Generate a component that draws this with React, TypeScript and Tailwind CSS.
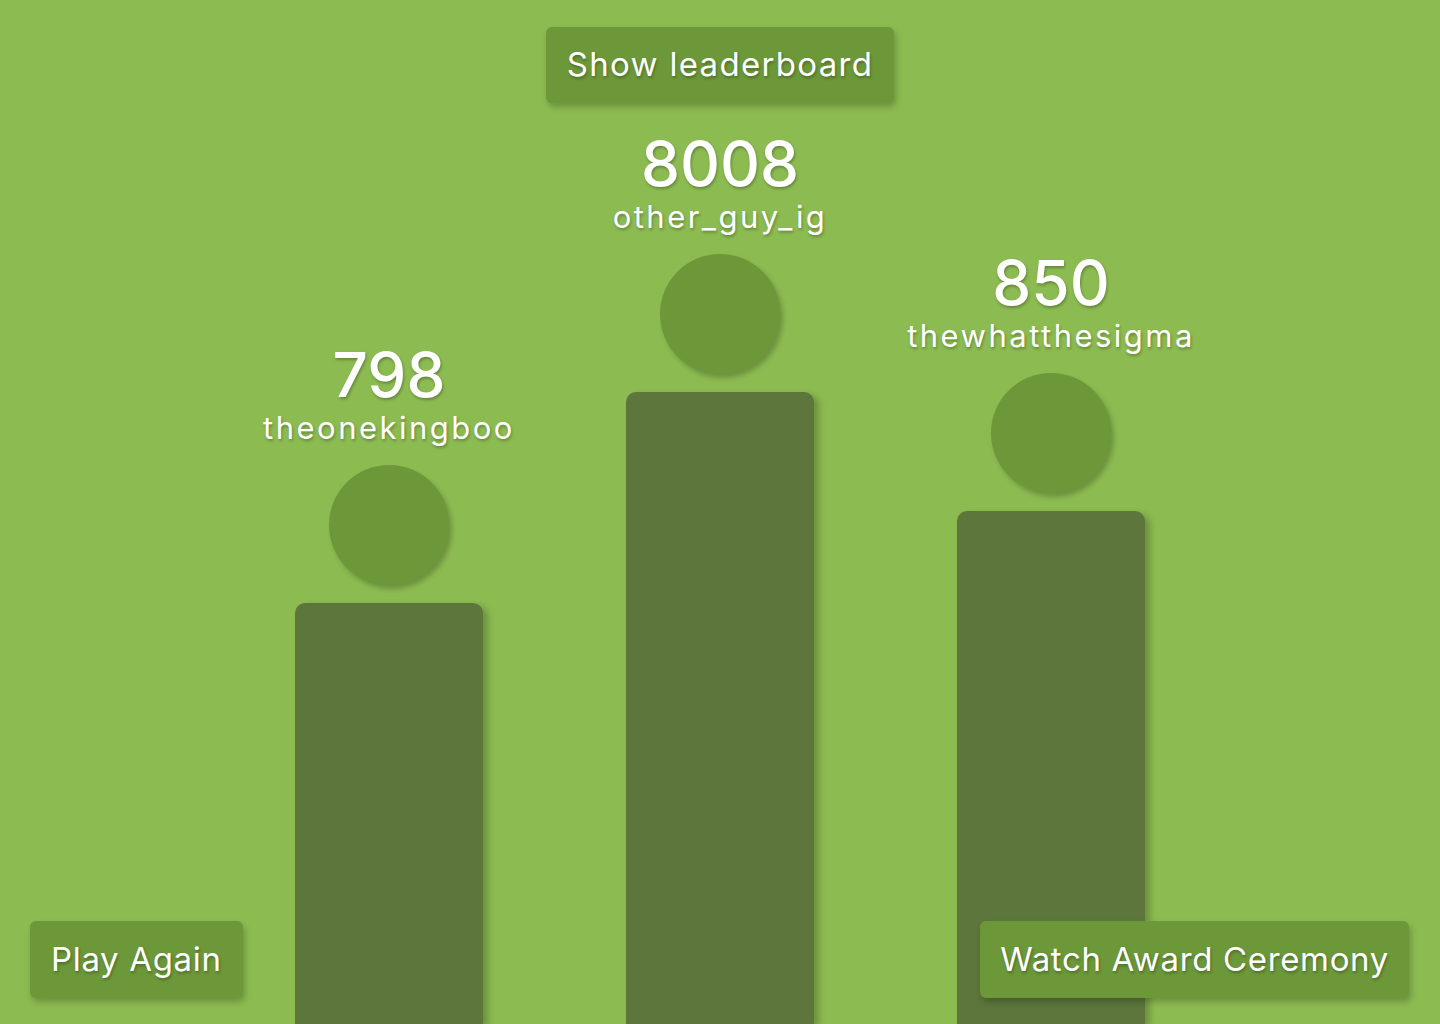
import React from 'react';

interface Placing {
  score: number;
  name: string;
  height: number;
}

// podium order: 2nd, 1st, 3rd
const placings: Placing[] = [
  { score: 798, name: 'theonekingboo', height: 421 },
  { score: 8008, name: 'other_guy_ig', height: 632 },
  { score: 850, name: 'thewhatthesigma', height: 513 },
];

const textShadow = '[text-shadow:1px_2px_3px_rgba(0,0,0,0.28)]';

function PodiumColumn({ placing }: { placing: Placing }) {
  return (
    <div className="flex w-[188px] flex-col items-center">
      <div className={`text-[62px] leading-[60px] font-medium text-white ${textShadow}`}>
        {placing.score}
      </div>
      <div className={`mt-[3px] whitespace-nowrap text-[31px] leading-[40px] tracking-[0.08em] text-white ${textShadow}`}>
        {placing.name}
      </div>
      <div className="mt-[17px] h-[120px] w-[120px] rounded-full bg-[#6c9839] shadow-[3px_4px_5px_rgba(0,0,0,0.22)]" />
      <div
        className="mt-[18px] w-[188px] rounded-t-[10px] bg-[#5c763c] shadow-[5px_3px_6px_rgba(0,0,0,0.22)]"
        style={{ height: placing.height }}
      />
    </div>
  );
}

export default function App() {
  return (
    <div
      className="relative flex h-[1024px] w-full flex-col items-center overflow-hidden bg-[#8cbb51]"
      style={{ fontFamily: 'Inter, "Noto Sans", sans-serif' }}
    >
      <button
        className={`mt-[27px] h-[76px] rounded-[6px] bg-[#6c9839] px-[21px] text-[33px] tracking-[0.04em] text-white shadow-[2px_4px_6px_rgba(0,0,0,0.22)] ${textShadow}`}
      >
        Show leaderboard
      </button>

      <div className="flex flex-1 items-end justify-center gap-[143px]">
        {placings.map((p) => (
          <PodiumColumn key={p.name} placing={p} />
        ))}
      </div>

      <button
        className={`absolute bottom-[26px] left-[30px] h-[77px] rounded-[6px] bg-[#6c9839] px-[21px] text-[33px] tracking-[0.02em] text-white shadow-[2px_4px_6px_rgba(0,0,0,0.22)] ${textShadow}`}
      >
        Play Again
      </button>
      <button
        className={`absolute bottom-[26px] right-[31px] h-[77px] rounded-[6px] bg-[#6c9839] px-[20px] text-[33px] tracking-[0.02em] text-white shadow-[2px_4px_6px_rgba(0,0,0,0.22)] ${textShadow}`}
      >
        Watch Award Ceremony
      </button>
    </div>
  );
}
